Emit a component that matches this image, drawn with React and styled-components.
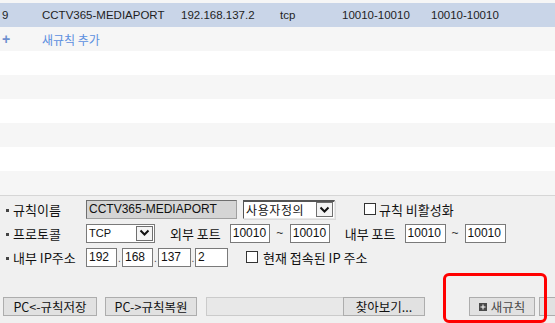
import React from "react";
import styled, { createGlobalStyle } from "styled-components";

const Global = createGlobalStyle`
  html, body { margin: 0; padding: 0; background: #ffffff; }
  body { font-family: "Noto Sans CJK KR", "Liberation Sans", sans-serif; }
  * { box-sizing: border-box; }
`;

const KR = `"Noto Sans CJK KR", "Liberation Sans", sans-serif`;
const LAT = `"Liberation Sans", "Noto Sans CJK KR", sans-serif`;

const Page = styled.div`
  position: relative;
  width: 555px;
  height: 323px;
  overflow: hidden;
  display: flex;
  flex-direction: column;
`;

const List = styled.div`
  display: flex;
  flex-direction: column;
`;

const TopStrip = styled.div`
  height: 3px;
  background: #f6f6f6;
`;

const DataRow = styled.div`
  height: 24px;
  display: grid;
  grid-template-columns: 40px 139px 99px 62px 89px 1fr;
  align-items: center;
  padding-left: 2px;
  background: #c9d5e8;
  font-family: ${LAT};
  font-size: 11.5px;
  color: #1e1e1e;
  white-space: nowrap;
`;

const AddRow = styled.div`
  height: 24px;
  display: grid;
  grid-template-columns: 40px 1fr;
  align-items: center;
  padding-left: 2px;
  background: #f6f6f6;
`;

const Plus = styled.span`
  font-family: ${LAT};
  font-weight: bold;
  font-size: 14px;
  color: #6d8fcf;
  line-height: 1;
`;

const AddText = styled.span`
  font-family: ${KR};
  font-size: 12px;
  color: #5b8fe0;
`;

const EmptyRow = styled.div`
  height: 24px;
  background: ${(p) => (p.$alt ? "#f6f6f6" : "#ffffff")};
`;

const Panel = styled.div`
  flex: 1;
  background: #f0f0f0;
  border-top: 1px solid #d6d6d6;
  display: flex;
  flex-direction: column;
  padding-top: 1px;
`;

const Form = styled.div`
  display: flex;
  flex-direction: column;
`;

const FormRow = styled.div`
  height: 24px;
  display: flex;
  align-items: center;
  padding-left: 6px;
  white-space: nowrap;
`;

const Label = styled.span`
  display: flex;
  align-items: center;
  width: 80px;
  font-family: ${KR};
  font-size: 13px;
  color: #111;
  &::before {
    content: "";
    width: 3px;
    height: 3px;
    background: #444;
    margin-right: 4px;
    margin-top: 3px;
  }
`;

const Text = styled.span`
  font-family: ${KR};
  font-size: 13px;
  color: #111;
  margin-left: ${(p) => p.$ml || 0}px;
`;

const Input = styled.div`
  flex: none;
  width: ${(p) => p.$w}px;
  height: 19px;
  margin-left: ${(p) => p.$ml || 0}px;
  display: flex;
  align-items: center;
  padding-left: 2px;
  background: ${(p) => (p.$disabled ? "#d5d5d5" : "#ffffff")};
  border: 1px solid #7a7a7a;
  border-color: ${(p) => (p.$disabled ? "#6f6f6f #a0a0a0 #a0a0a0 #6f6f6f" : "#7a7a7a")};
  font-family: ${LAT};
  font-size: 12px;
  color: #111;
  overflow: hidden;
`;

const Select = styled.div`
  flex: none;
  width: ${(p) => p.$w}px;
  height: 19px;
  margin-left: ${(p) => p.$ml || 0}px;
  display: flex;
  align-items: center;
  justify-content: space-between;
  background: #ffffff;
  border: 1px solid #7a7a7a;
  ${(p) =>
    p.$sunken &&
    `border-top: 2px solid #555; border-left: 1px solid #555; border-right: 1px solid #e8e8e8; border-bottom: 1px solid #e8e8e8; box-shadow: 1px 1px 0 #dadada;`}
  padding-left: 2px;
  font-family: ${(p) => (p.$kr ? KR : LAT)};
  font-size: ${(p) => (p.$kr ? "12px" : "11px")};
  letter-spacing: ${(p) => (p.$kr ? "0.6px" : "0")};
  color: #111;
`;

const Arrow = styled.span`
  width: 17px;
  height: 15px;
  margin-right: 1px;
  border: 1px solid #6f6f6f;
  background: #f4f4f4;
  display: flex;
  align-items: center;
  justify-content: center;
`;

const Tilde = styled.span`
  flex: none;
  width: ${(p) => p.$w}px;
  text-align: center;
  font-family: ${LAT};
  font-size: 12px;
  color: #333;
`;

const Dot = styled.span`
  flex: none;
  width: ${(p) => p.$w || 5}px;
  align-self: flex-end;
  margin-bottom: 5px;
  text-align: center;
  font-family: ${LAT};
  font-size: 10px;
  line-height: 1;
  color: #444;
`;

const Check = styled.span`
  flex: none;
  width: 12px;
  height: 12px;
  margin-left: ${(p) => p.$ml || 0}px;
  border: 1px solid #333;
  background: #ffffff;
`;

const Bar = styled.div`
  margin-top: 28px;
  height: 19px;
  display: flex;
  align-items: stretch;
  padding-left: 3px;
  white-space: nowrap;
`;

const Button = styled.div`
  flex: none;
  width: ${(p) => p.$w}px;
  margin-left: ${(p) => p.$ml || 0}px;
  display: flex;
  align-items: center;
  justify-content: center;
  gap: 4px;
  background: #e1e1e1;
  border: 1px solid #adadad;
  font-family: ${KR};
  font-size: 12.5px;
  color: ${(p) => (p.$muted ? "#4a4a4a" : "#111")};
`;

const FileField = styled.div`
  flex: none;
  width: ${(p) => p.$w}px;
  margin-left: ${(p) => p.$ml || 0}px;
  background: #e8e8e8;
  border: 1px solid #cbcbcb;
  border-right: none;
`;

const Highlight = styled.div`
  position: absolute;
  left: 443px;
  top: 273px;
  width: 104px;
  height: 50px;
  border: 3px solid #ff0000;
  border-radius: 6px;
  pointer-events: none;
`;

const Chevron = () => (
  <svg width="11" height="8" viewBox="0 0 11 8">
    <polyline points="1.5,1.5 5.5,5.5 9.5,1.5" fill="none" stroke="#111" strokeWidth="2" />
  </svg>
);

const PlusBox = () => (
  <svg width="8" height="8" viewBox="0 0 8 8">
    <rect x="0" y="0" width="8" height="8" fill="#4a4a4a" />
    <rect x="1.5" y="3.5" width="5" height="1" fill="#fff" />
    <rect x="3.5" y="1.5" width="1" height="5" fill="#fff" />
  </svg>
);

export default function App() {
  return (
    <>
      <Global />
      <Page>
        <List>
          <TopStrip />
          <DataRow>
            <span>9</span>
            <span>CCTV365-MEDIAPORT</span>
            <span>192.168.137.2</span>
            <span>tcp</span>
            <span>10010-10010</span>
            <span>10010-10010</span>
          </DataRow>
          <AddRow>
            <Plus>+</Plus>
            <AddText>새규칙 추가</AddText>
          </AddRow>
          {[0, 1, 2, 3, 4, 5].map((i) => (
            <EmptyRow key={i} $alt={i % 2 === 1} />
          ))}
        </List>
        <Panel>
          <Form>
            <FormRow>
              <Label>규칙이름</Label>
              <Input $w={151} $disabled>CCTV365-MEDIAPORT</Input>
              <Select $w={92} $ml={6} $kr $sunken>
                <span>사용자정의</span>
                <Arrow><Chevron /></Arrow>
              </Select>
              <Check $ml={29} />
              <Text $ml={3}>규칙 비활성화</Text>
            </FormRow>
            <FormRow>
              <Label>프로토콜</Label>
              <Select $w={69}>
                <span>TCP</span>
                <Arrow><Chevron /></Arrow>
              </Select>
              <Text $ml={15}>외부 포트</Text>
              <Input $w={40} $ml={9}>10010</Input>
              <Tilde $w={20}>~</Tilde>
              <Input $w={40}>10010</Input>
              <Text $ml={15}>내부 포트</Text>
              <Input $w={41} $ml={9}>10010</Input>
              <Tilde $w={19}>~</Tilde>
              <Input $w={41}>10010</Input>
            </FormRow>
            <FormRow>
              <Label>내부 IP주소</Label>
              <Input $w={31}>192</Input>
              <Dot $w={5}>.</Dot>
              <Input $w={31}>168</Input>
              <Dot $w={5}>.</Dot>
              <Input $w={33}>137</Input>
              <Dot $w={4}>.</Dot>
              <Input $w={33}>2</Input>
              <Check $ml={18} />
              <Text $ml={5}>현재 접속된 IP 주소</Text>
            </FormRow>
          </Form>
          <Bar>
            <Button $w={94}>PC&lt;-규칙저장</Button>
            <Button $w={92} $ml={8}>PC-&gt;규칙복원</Button>
            <FileField $w={137} $ml={9} />
            <Button $w={82}>찾아보기...</Button>
            <Button $w={66} $ml={44} $muted>
              <PlusBox />
              <span>새규칙</span>
            </Button>
            <Button $w={60} $ml={4}>수정</Button>
          </Bar>
        </Panel>
        <Highlight />
      </Page>
    </>
  );
}
